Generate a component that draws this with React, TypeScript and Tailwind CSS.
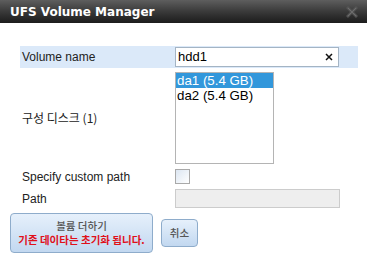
import { useState } from "react";

const disks = ["da1 (5.4 GB)", "da2 (5.4 GB)"];

export default function App() {
  const [name, setName] = useState("hdd1");
  const [selected, setSelected] = useState(0);
  const [custom, setCustom] = useState(false);

  return (
    <div className="w-[367px] h-[263px] bg-white overflow-hidden font-['Liberation_Sans','Noto_Sans_CJK_KR',sans-serif] text-[12px] text-[#222]">
      {/* title bar */}
      <div className="h-[23px] flex items-center justify-between pl-[10px] pr-[9px] bg-gradient-to-b from-[#5e5e5e] via-[#3a3a3a] to-[#1c1c1c]">
        <span className="font-['DejaVu_Sans',sans-serif] font-bold text-[12px] text-white">UFS Volume Manager</span>
        <svg width="12" height="12" viewBox="0 0 12 12">
          <path d="M2 2 L10 10 M10 2 L2 10" stroke="#555" strokeWidth="2.8" strokeLinecap="square" />
          <path d="M2 2 L10 10 M10 2 L2 10" stroke="#6c6c6c" strokeWidth="1" />
        </svg>
      </div>

      <div className="pt-[23px] pl-[20px] pr-[9px]">
        {/* volume name */}
        <div className="h-[22px] flex items-center bg-[#dbe9f9]">
          <div className="w-[155px] pl-[2px]">Volume name</div>
          <div className="w-[164px] h-[20px] border border-[#a4b4c4] bg-white flex items-center pl-[2px] pr-[5px]">
            <input
              value={name}
              onChange={(e) => setName(e.target.value)}
              className="flex-1 min-w-0 outline-none text-[13px] text-black bg-transparent"
            />
            <svg width="8" height="8" viewBox="0 0 8 8">
              <path d="M1 1 L7 7 M7 1 L1 7" stroke="#111" strokeWidth="1.5" />
            </svg>
          </div>
        </div>

        {/* disks */}
        <div className="mt-[4px] flex items-center">
          <div className="w-[155px] pl-[2px] font-['Noto_Sans_CJK_KR',sans-serif] text-[12px]">구성 디스크 (1)</div>
          <div className="w-[99px] h-[92px] border border-[#b4b4b4] bg-white">
            {disks.map((d, i) => (
              <div
                key={d}
                onClick={() => setSelected(i)}
                className={
                  i === selected
                    ? "h-[15px] leading-[15px] pl-[1px] text-[13.3px] bg-[#3297db] text-white"
                    : "h-[15px] leading-[15px] pl-[1px] text-[13.3px] text-black"
                }
              >
                {d}
              </div>
            ))}
          </div>
        </div>

        {/* custom path */}
        <div className="mt-[5px] flex items-center h-[15px]">
          <div className="w-[155px] pl-[2px]">Specify custom path</div>
          <button
            onClick={() => setCustom(!custom)}
            className="w-[15px] h-[15px] border border-[#a9a9a9] bg-gradient-to-br from-[#dce6f2] to-white"
          />
        </div>

        <div className="mt-[5px] flex items-center h-[19px]">
          <div className="w-[155px] pl-[2px]">Path</div>
          <div className="w-[165px] h-[19px] border border-[#cccccc] bg-[#eeeeee]" />
        </div>
      </div>

      {/* buttons */}
      <div className="mt-[5px] pl-[10px] flex items-center gap-[8px]">
        <button className="w-[143px] h-[40px] rounded-[4px] border border-[#8eaccb] bg-gradient-to-b from-[#e6f0fb] to-[#c2d8f0] flex flex-col items-center justify-center font-['Noto_Sans_CJK_KR',sans-serif] text-[10.5px] leading-[14px]">
          <span className="text-[#555] font-medium">볼륨 더하기</span>
          <span className="text-[#e0101a] font-bold">기존 데이타는 초기화 됩니다.</span>
        </button>
        <button className="w-[37px] h-[28px] rounded-[4px] border border-[#8eaccb] bg-gradient-to-b from-[#e6f0fb] to-[#c2d8f0] font-['Noto_Sans_CJK_KR',sans-serif] text-[10.5px] font-medium text-[#555]">
          취소
        </button>
      </div>
    </div>
  );
}
